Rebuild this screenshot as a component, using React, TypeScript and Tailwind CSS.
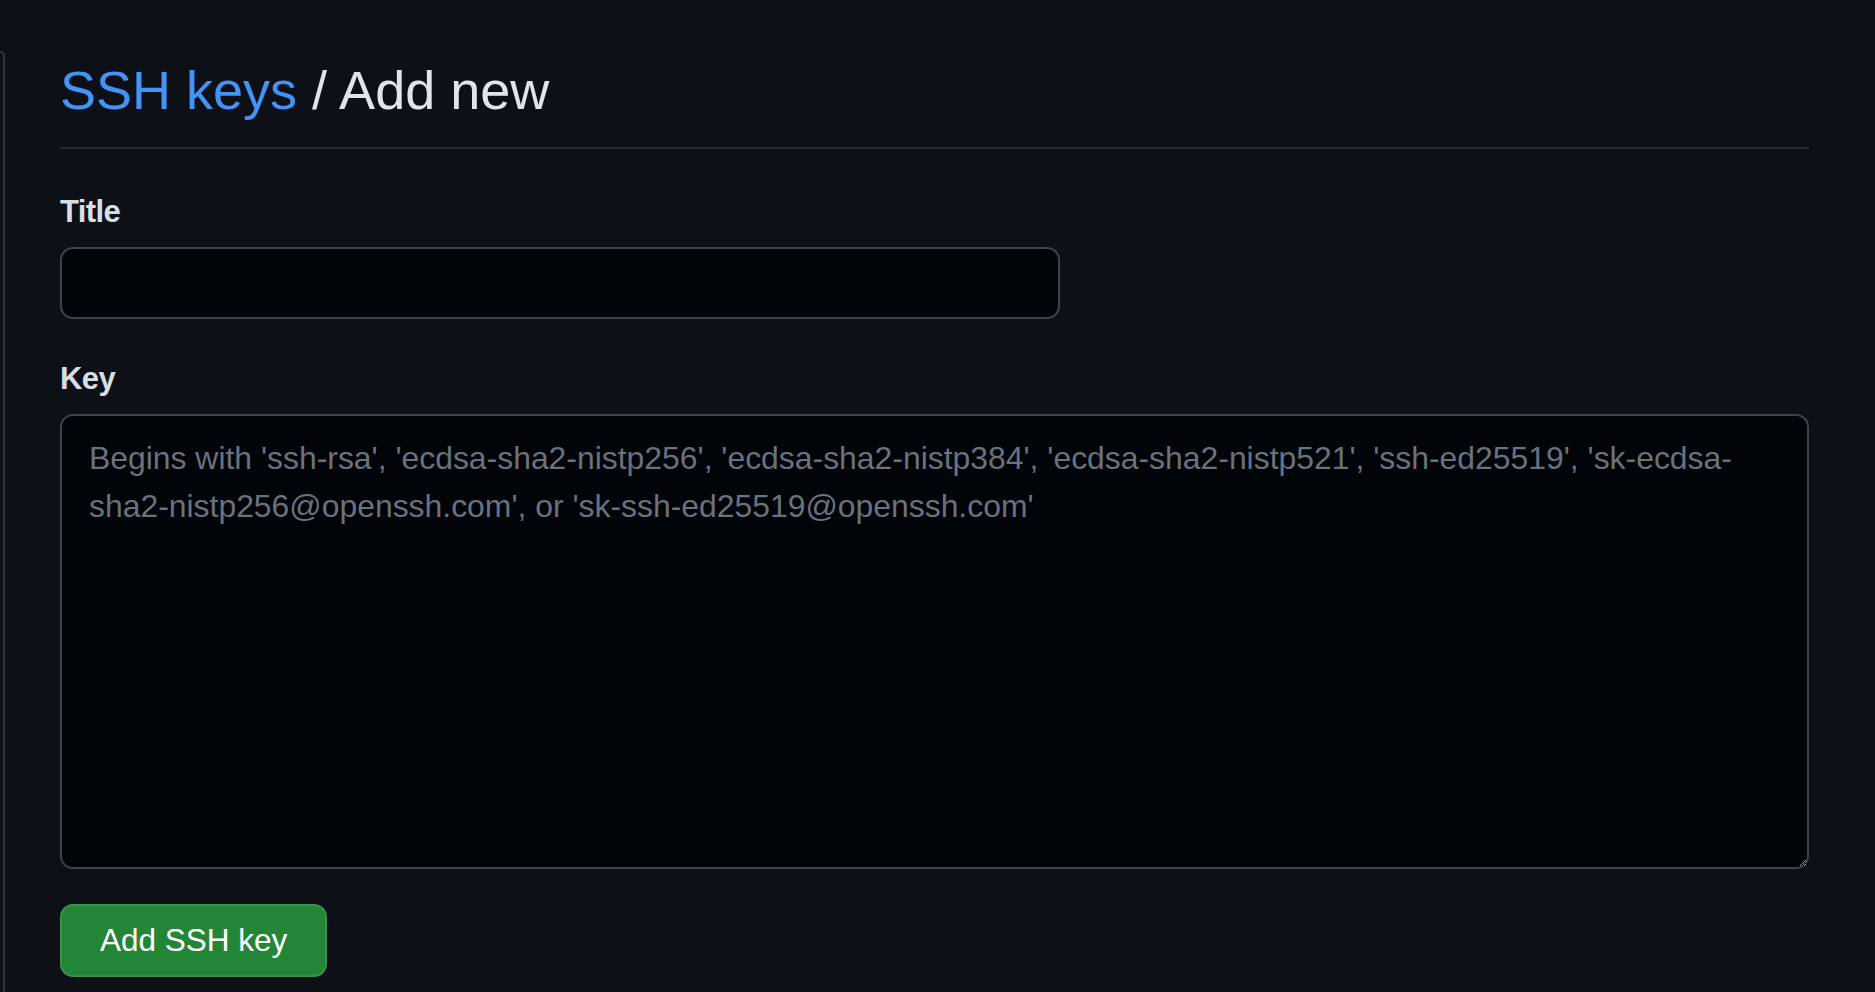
import { useState } from 'react';

export default function App() {
  const [title, setTitle] = useState('');
  const [key, setKey] = useState('');

  return (
    <div className="flex min-h-[992px] w-full bg-[#0d1117] font-['Liberation_Sans',Arial,sans-serif] [color-scheme:dark]">
      {/* edge of the settings sidebar */}
      <div className="mt-[51px] w-[5px] shrink-0 rounded-tr-[12px] border-t-2 border-r-2 border-[#30363d]" />

      <main className="flex-1 pl-[55px] pr-[66px]">
        {/* Subhead */}
        <div className="border-b-2 border-[#262c33] pt-[57px] pb-[23px]">
          <h2 className="text-[54px] font-normal leading-[67px] text-[#dfe5ec]">
            <a href="#" className="text-[#4493f8]">
              SSH keys
            </a>{' '}
            / Add new
          </h2>
        </div>

        <form className="flex flex-col" onSubmit={(e) => e.preventDefault()}>
          <label htmlFor="key-title" className="mt-[40px] text-[31px] leading-[45px] font-bold tracking-[-0.02em] text-[#d8dee5]">
            Title
          </label>
          <input
            id="key-title"
            value={title}
            onChange={(e) => setTitle(e.target.value)}
            className="mt-[13px] h-[72px] w-[1000px] rounded-[13px] border-2 border-[#3d444d] bg-[#010409] px-[27px] text-[31.5px] text-[#e6edf3] outline-none"
          />

          <label htmlFor="key-body" className="mt-[37px] text-[31px] leading-[45px] font-bold tracking-[-0.02em] text-[#d8dee5]">
            Key
          </label>
          <textarea
            id="key-body"
            value={key}
            onChange={(e) => setKey(e.target.value)}
            placeholder="Begins with 'ssh-rsa', 'ecdsa-sha2-nistp256', 'ecdsa-sha2-nistp384', 'ecdsa-sha2-nistp521', 'ssh-ed25519', 'sk-ecdsa-sha2-nistp256@openssh.com', or 'sk-ssh-ed25519@openssh.com'"
            className="mt-[13px] h-[455px] w-full rounded-[13px] border-2 border-[#3d444d] bg-[#010409] px-[27px] pt-[18px] text-[31.9px] leading-[48px] text-[#e6edf3] outline-none placeholder:text-[#6a727c]"
          />

          <div className="mt-[35px]">
            <button
              type="submit"
              className="h-[73px] rounded-[13px] border-2 border-[#ffffff1a] bg-[#238636] px-[38px] text-[31.5px] font-medium text-white"
            >
              Add SSH key
            </button>
          </div>
        </form>
      </main>
    </div>
  );
}
